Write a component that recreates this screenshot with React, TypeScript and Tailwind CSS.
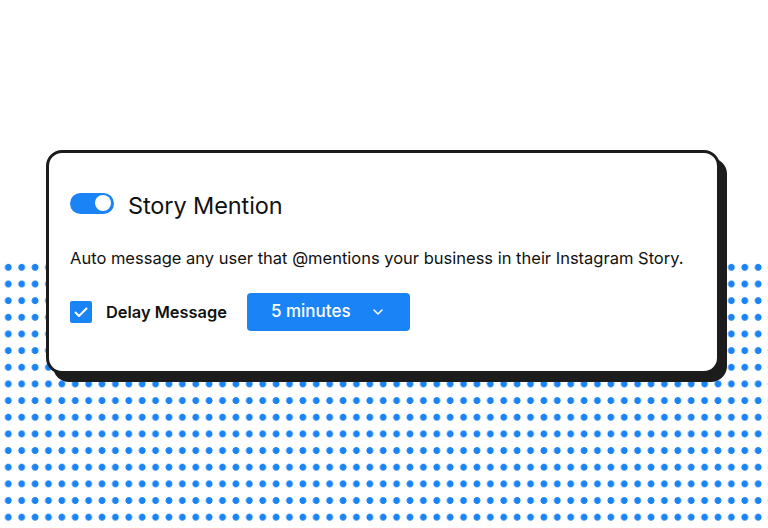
import React from "react";

export default function App() {
  return (
    <div
      className="relative w-[768px] h-[528px] overflow-hidden bg-white"
      style={{ fontFamily: "Inter, 'Noto Sans', sans-serif" }}
    >
      <div className="absolute left-0 right-0 top-[259px] bottom-0 bg-[radial-gradient(circle,#1a84f6_3.1px,transparent_3.7px)] bg-[length:13.4px_16.667px] bg-[position:1.6px_0px]" />
      <div className="relative ml-[46px] mt-[150px] w-[674px] h-[224px] rounded-[16px] border-[3px] border-[#1c1c1c] bg-white shadow-[7px_8px_0_#1c1c1c] pl-[21px] pt-[40px] flex flex-col">
        <div className="flex items-center h-[20px]">
          <div className="w-[44px] h-[21px] rounded-full bg-[#1a84f6] flex items-center justify-end pr-[3px]">
            <div className="w-[16px] h-[16px] rounded-full bg-white" />
          </div>
          <span className="ml-[14px] text-[23.5px] leading-none text-[#111] tracking-[-0.1px] mt-[6px]">
            Story Mention
          </span>
        </div>
        <p className="mt-[35px] text-[16.5px] leading-[20px] text-[#111]">
          Auto message any user that @mentions your business in their Instagram Story.
        </p>
        <div className="mt-[25px] flex items-center">
          <div className="w-[22px] h-[22px] rounded-[2px] bg-[#1a84f6] flex items-center justify-center">
            <svg width="14" height="11" viewBox="0 0 14 11" fill="none">
              <path d="M1.5 5.5 L5 9 L12.5 1.5" stroke="white" strokeWidth="2" strokeLinecap="round" strokeLinejoin="round" />
            </svg>
          </div>
          <span className="ml-[14px] text-[16.4px] font-semibold text-[#111]">Delay Message</span>
          <div className="ml-[20px] w-[163px] h-[38px] rounded-[4px] bg-[#1a84f6] flex items-center pl-[24px]">
            <span className="text-[17px] font-medium text-white">5 minutes</span>
            <svg className="ml-[22px]" width="10" height="6" viewBox="0 0 10 6" fill="none">
              <path d="M1 1 L5 5 L9 1" stroke="white" strokeWidth="1.5" strokeLinecap="round" strokeLinejoin="round" />
            </svg>
          </div>
        </div>
      </div>
    </div>
  );
}
